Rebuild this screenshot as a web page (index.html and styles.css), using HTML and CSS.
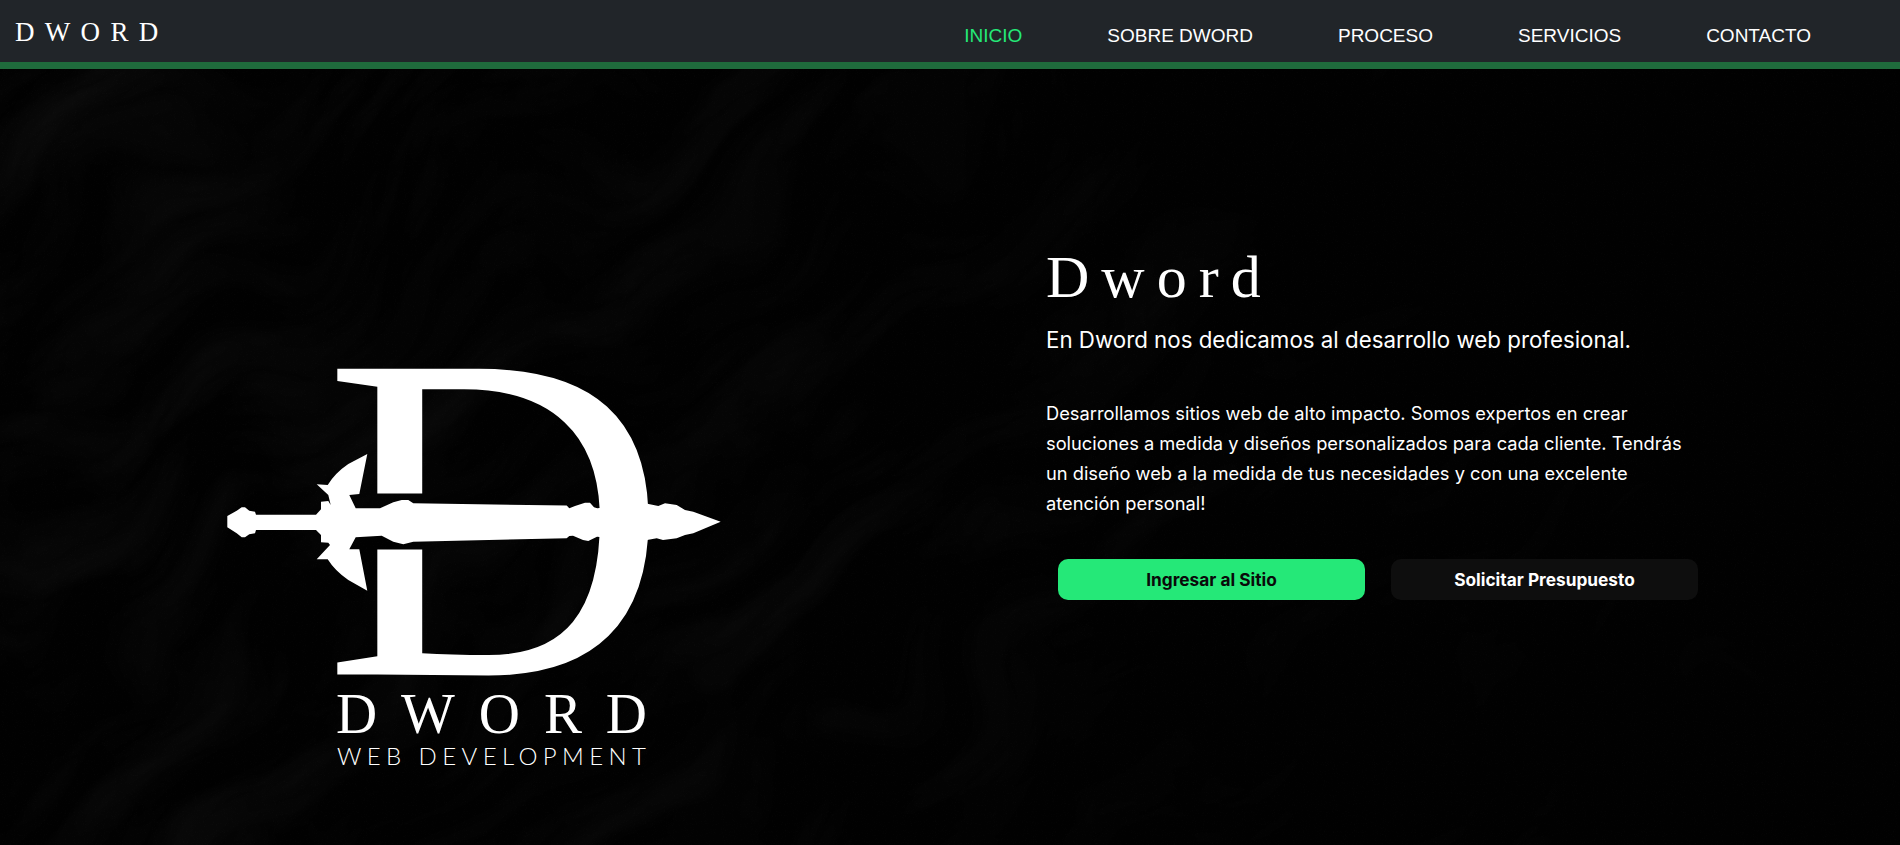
FILE: index.html
```html
<!DOCTYPE html>
<html lang="en">
<head>
  <meta charset="UTF-8">
  <meta name="viewport" content="width=device-width, initial-scale=1.0">
  <title>Dword</title>
  <link rel="stylesheet" href="styles.css">
</head>
<body>

  <header class="topbar">
    <a class="brand" href="#">DWORD</a>
    <nav class="menu">
      <a class="menu-link active" href="#">INICIO</a>
      <a class="menu-link" href="#">SOBRE DWORD</a>
      <a class="menu-link" href="#">PROCESO</a>
      <a class="menu-link" href="#">SERVICIOS</a>
      <a class="menu-link" href="#">CONTACTO</a>
    </nav>
  </header>

  <main class="hero">
    <svg class="hero-texture" width="1900" height="776" aria-hidden="true">
      <defs>
        <filter id="grain" x="0" y="0" width="100%" height="100%">
          <feTurbulence type="fractalNoise" baseFrequency="0.9" numOctaves="2" seed="4"/>
          <feColorMatrix values="0 0 0 0 1  0 0 0 0 1  0 0 0 0 1  0.5 0 0 0 -0.27"/>
        </filter>
        <filter id="folds" x="0" y="0" width="100%" height="100%">
          <feTurbulence type="fractalNoise" baseFrequency="0.004" numOctaves="2" seed="7" result="warp"/>
          <feTurbulence type="turbulence" baseFrequency="0.003 0.011" numOctaves="4" seed="23" result="lines"/>
          <feDisplacementMap in="lines" in2="warp" scale="220" xChannelSelector="R" yChannelSelector="G"/>
          <feColorMatrix values="0 0 0 0 1  0 0 0 0 1  0 0 0 0 1  0.9 0 0 0 -0.08"/>
        </filter>
        <linearGradient id="fade" x1="0" x2="1" y1="0" y2="0">
          <stop offset="0" stop-color="#fff"/>
          <stop offset="0.45" stop-color="#bbb"/>
          <stop offset="0.7" stop-color="#444"/>
          <stop offset="1" stop-color="#222"/>
        </linearGradient>
        <mask id="foldMask" maskUnits="userSpaceOnUse" x="0" y="0" width="1900" height="776">
          <rect width="1900" height="776" fill="url(#fade)"/>
        </mask>
      </defs>
      <g mask="url(#foldMask)">
        <rect x="-500" y="-700" width="2900" height="2200" filter="url(#folds)" transform="rotate(-38 950 388)" opacity="0.06"/>
      </g>
      <rect width="1900" height="776" filter="url(#grain)" opacity="0.1"/>
    </svg>

    <div class="hero-logo">
      <svg class="logo" width="500" height="412" viewBox="225 365 500 412">
        <defs>
          <mask id="stemGap" maskUnits="userSpaceOnUse" x="225" y="365" width="500" height="412">
            <rect x="225" y="365" width="500" height="412" fill="#fff"/>
            <rect x="368" y="493.5" width="62" height="56" fill="#000"/>
          </mask>
        </defs>
        <g mask="url(#stemGap)">
          <text class="logo-mark" transform="translate(323.6 674.6) scale(1.02 1)">D</text>
        </g>
        <path fill="#fff" d="M227.3 516 L236.7 510.7 L241.7 507.3 L245 507.3 L249.3 510.7 L255 511.7 L256 514.7 L316 514.7 L321 509.3 L321 501.7 L328.3 501 L330.7 505 L328.3 495 L316.7 484.3 L327.7 485 Q335 473 348.3 464 L367.3 454 L359.3 494 L349.3 495 L355.7 508.3 L380 508.3 L393.3 502.3 L401.7 500 L408.3 500 L413.3 503.3 L566.7 505.5 L569.3 508.3 L575 506 L585 502.7 L590 502.7 L594 507.3 L597.3 508.3 L645 503.3 L658.3 506 L665 503.3 L676.7 505 L685 510 L693.3 511.7 L720.7 521.7 L693.3 533.3 L685 535 L676.7 538.3 L663 540 L656.7 538.3 L643 540.7 L597 536.7 L588.3 541 L583 540 L573 535.7 L569.3 536 L566.7 538.3 L413.3 541.7 L403.3 544.3 L393.3 541.7 L381.7 535.7 L355.7 537.3 L349.3 549.3 L359.3 549.3 L367.3 590.7 L348.3 580 Q335 571 327.7 559.3 L316.7 559.3 L330 545 L328.3 542.7 L321 542.3 L321 535 L316 530 L256 530 L255 533.3 L249.3 534.3 L245 537.3 L241.7 537.3 L236.7 533.3 L227.3 527.3 Z"/>
        <text class="logo-name" x="336" y="733" textLength="311" lengthAdjust="spacing">DWORD</text>
        <text class="logo-tag" x="337" y="765" textLength="309" lengthAdjust="spacing">WEB DEVELOPMENT</text>
      </svg>
    </div>

    <section class="hero-text">
      <h1 class="hero-title">Dword</h1>
      <h2 class="hero-sub">En Dword nos dedicamos al desarrollo web profesional.</h2>
      <p class="hero-desc">Desarrollamos sitios web de alto impacto. Somos expertos en crear soluciones a medida y diseños personalizados para cada cliente. Tendrás un diseño web a la medida de tus necesidades y con una excelente atención personal!</p>
      <div class="hero-actions">
        <a class="btn btn-green" href="#">Ingresar al Sitio</a>
        <a class="btn btn-dark" href="#">Solicitar Presupuesto</a>
      </div>
    </section>
  </main>

</body>
</html>
```

FILE: styles.css
```css
* {
  margin: 0;
  padding: 0;
  box-sizing: border-box;
}

body {
  font-family: "Inter", sans-serif;
  background: #010101;
  color: #fff;
  height: 845px;
  overflow: hidden;
}

a {
  text-decoration: none;
}

.topbar {
  display: flex;
  justify-content: space-between;
  align-items: center;
  height: 69px;
  padding: 0 89px 0 15px;
  background: #212529;
  border-bottom: 7px solid #1f6b3c;
}

.brand {
  margin-top: 2px;
  font-family: "Liberation Serif", serif;
  font-size: 27px;
  letter-spacing: 10.3px;
  color: #fff;
}

.menu {
  display: flex;
  gap: 85px;
  margin-top: 9px;
}

.menu-link {
  font-family: "Liberation Sans", sans-serif;
  font-size: 19px;
  color: #fff;
}

.menu-link.active {
  color: #25e878;
}

.hero {
  position: relative;
  display: grid;
  grid-template-columns: 950px 950px;
  height: 776px;
  overflow: hidden;
}

.hero-texture {
  position: absolute;
  top: 0;
  left: 0;
}

.hero-logo {
  position: relative;
  display: flex;
  justify-content: center;
  align-items: flex-end;
  padding-bottom: 68px;
}

.logo-mark {
  font-family: "Liberation Serif", serif;
  font-size: 467px;
  fill: #fff;
}

.logo-name {
  font-family: "Liberation Serif", serif;
  font-size: 57px;
  fill: #fff;
}

.logo-tag {
  font-family: "Lato", sans-serif;
  font-size: 24px;
  font-weight: 300;
  fill: #fff;
}

.hero-text {
  position: relative;
  padding: 172px 0 0 96px;
}

.hero-title {
  font-family: "Liberation Serif", serif;
  font-size: 60px;
  font-weight: 400;
  line-height: 72px;
  letter-spacing: 12px;
}

.hero-sub {
  margin-top: 12px;
  font-size: 22.3px;
  font-weight: 400;
  line-height: 30px;
}

.hero-desc {
  width: 650px;
  margin-top: 43px;
  font-size: 18.3px;
  line-height: 30px;
}

.hero-actions {
  display: flex;
  gap: 26px;
  margin: 41px 0 0 12px;
}

.btn {
  display: flex;
  justify-content: center;
  align-items: center;
  width: 307px;
  height: 41px;
  border-radius: 10px;
  font-size: 17.3px;
  font-weight: 700;
}

.btn-green {
  background: #25e878;
  color: #0a0a0a;
}

.btn-dark {
  background: #0e0e0e;
  color: #fff;
}
```
